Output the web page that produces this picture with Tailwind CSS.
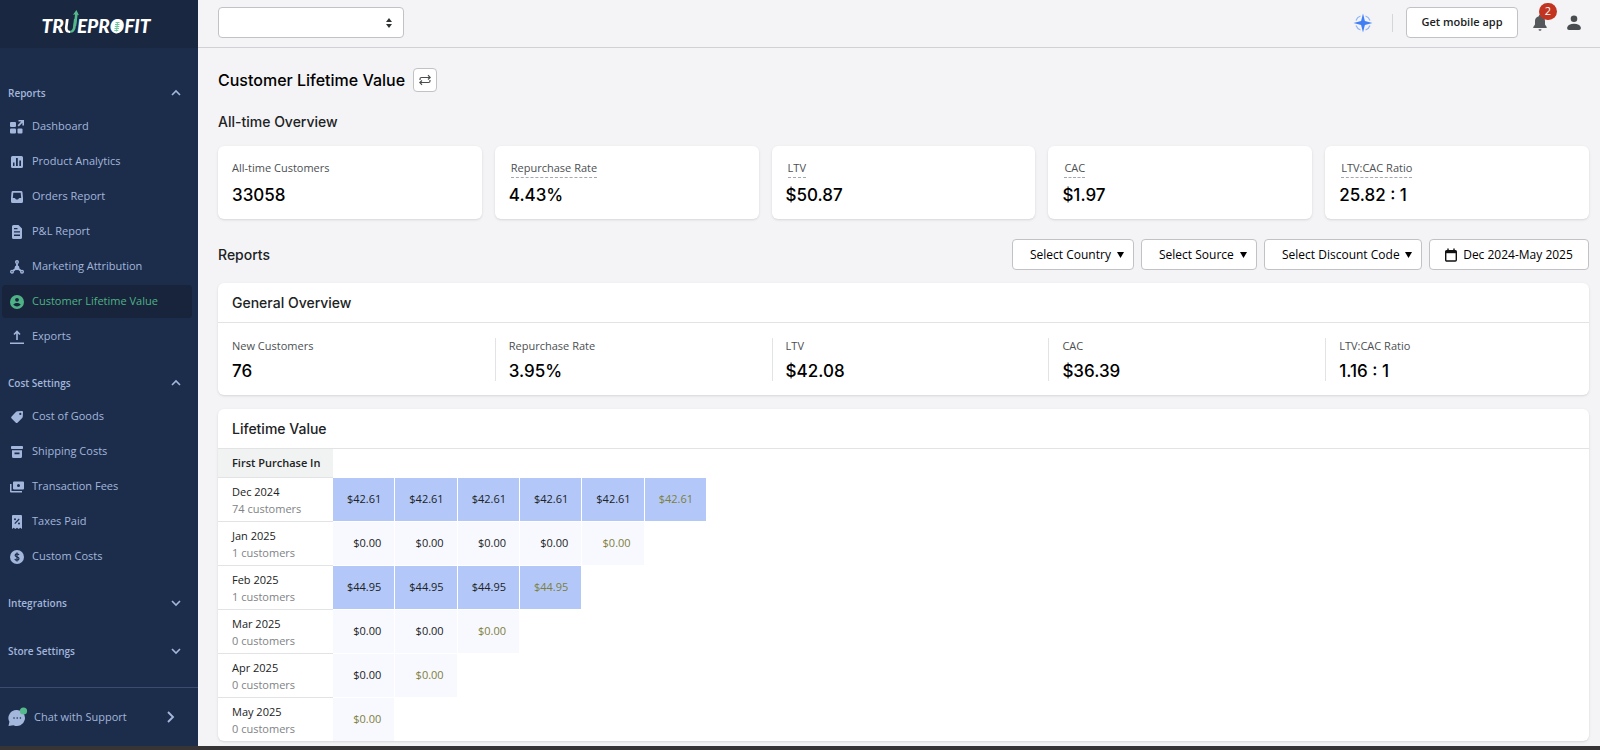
<!DOCTYPE html>
<html lang="en">
<head>
  <meta charset="UTF-8">
  <meta name="viewport" content="width=device-width, initial-scale=1.0">
  <title>Customer Lifetime Value</title>
  <script src="https://cdn.jsdelivr.net/npm/@tailwindcss/browser@4"></script>
</head>
<body class="min-h-screen flex flex-col bg-[#f4f4f6] font-['Open_Sans','Noto_Sans',sans-serif] text-[#202223]">
<div class="flex-1 flex">

  <!-- Sidebar -->
  <aside class="w-[198px] shrink-0 flex flex-col bg-[#1c2d4b] text-[#a3b6dc]">
    <a href="#" aria-label="TrueProfit" class="h-12 pt-1 pr-1.5 flex items-center justify-center bg-[#192840] font-['Lato',sans-serif] font-black italic text-[19px] leading-6 text-white">
      <span>TR</span><span class="relative bg-linear-to-r from-white from-50% to-[#55b98c] to-50% bg-clip-text text-transparent">U<svg class="absolute -top-1 -right-0.5 w-2 h-4" viewBox="0 0 8 16" fill="#55b98c"><path d="M5.400 0 8 5.200 6.600 4.800 5.200 16H2.600L4 4.600 2 4.800z"/></svg></span><span>EPR</span><span class="relative">O<svg class="absolute top-[5px] left-0 w-3.5 h-[15px]" viewBox="0 0 14 15"><ellipse cx="7" cy="7.500" rx="5.500" ry="7" transform="rotate(10 7 7.500)" fill="#fff"/><path d="M5.500 3.500h4M5 5.500h4.500M4.800 7.500h4.500M4.500 9.500h4.500M4.300 11.500h4M7.500 3l-1 9.500" fill="none" stroke="#6cc39c"/></svg></span><span>FIT</span>
    </a>

    <nav class="flex-1 text-[11px]">
      <button type="button" class="mt-[33px] w-full h-6 pl-2 pr-4 flex items-center justify-between text-[10px] font-semibold">
        Reports
        <svg class="w-3 h-3" viewBox="0 0 12 12" fill="none" stroke="currentColor" stroke-width="1.6"><path d="M2 8l4-4 4 4"/></svg>
      </button>
      <ul class="mt-[5px] pl-0.5 pr-1.5 flex flex-col gap-0.5">
        <li><a href="#" class="h-[33px] pl-2 flex items-center gap-2">
          <svg class="w-3.5 h-3.5" viewBox="0 0 14 14" fill="currentColor"><rect y="2" width="6" height="5" rx="1"/><rect y="8.5" width="6" height="5" rx="1"/><rect x="7.5" y="8.5" width="5" height="5" rx="1"/><path d="M8.5 0H14v5.5h-1.6V2.8L8.8 6.4 7.6 5.2l3.6-3.6H8.5z"/></svg>
          Dashboard</a></li>
        <li><a href="#" class="h-[33px] pl-2 flex items-center gap-2">
          <svg class="w-3.5 h-3.5" viewBox="0 0 14 14" fill="currentColor" fill-rule="evenodd"><path d="M2.5 1h9A1.5 1.5 0 0 1 13 2.500v9a1.500 1.500 0 0 1-1.500 1.500h-9A1.500 1.500 0 0 1 1 11.500v-9A1.500 1.500 0 0 1 2.500 1zM3 7.500V11h1.500V7.500zM6 3v8h1.800V3zM9.300 5.500V11H11V5.500z"/></svg>
          Product Analytics</a></li>
        <li><a href="#" class="h-[33px] pl-2 flex items-center gap-2">
          <svg class="w-3.5 h-3.5" viewBox="0 0 14 14" fill="currentColor" fill-rule="evenodd"><path d="M3 1h8a1.500 1.500 0 0 1 1.500 1.300L13 8v3.500a1.500 1.500 0 0 1-1.500 1.500h-9A1.500 1.500 0 0 1 1 11.500V8l.5-5.700A1.500 1.500 0 0 1 3 1zM3.300 2.800 2.800 8h1.700c.5 0 .7.300.9.700.2.500.5.800 1 .8h1.200c.5 0 .8-.300 1-.8.2-.400.400-.700.900-.700h1.700l-.5-5.200z"/></svg>
          Orders Report</a></li>
        <li><a href="#" class="h-[33px] pl-2 flex items-center gap-2">
          <svg class="w-3.5 h-3.5" viewBox="0 0 14 14" fill="currentColor" fill-rule="evenodd"><path d="M3.500 0H8.500L12 3.500v9a1.500 1.500 0 0 1-1.500 1.500h-7A1.500 1.500 0 0 1 2 12.500v-11A1.500 1.500 0 0 1 3.500 0zM4 3v1.300h3.500V3zM4 6.300v1.300h6V6.300zM4 9.600v1.300h6V9.600z"/></svg>
          P&amp;L Report</a></li>
        <li><a href="#" class="h-[33px] pl-2 flex items-center gap-2">
          <svg class="w-3.5 h-3.5" viewBox="0 0 14 14" fill="none" stroke="currentColor" stroke-width="1.400"><circle cx="7" cy="2" r="1.300"/><circle cx="2" cy="11.700" r="1.300"/><circle cx="12" cy="11.700" r="1.300"/><path d="M7 3.500V7M3.200 10.800 6 8.500M10.800 10.800 8 8.500" stroke-width="1.800"/><circle cx="7" cy="7.800" r="1.700" fill="currentColor"/></svg>
          Marketing Attribution</a></li>
        <li><a href="#" aria-current="page" class="h-[33px] pl-2 flex items-center gap-2 rounded-sm bg-[#17243b] text-[#4fb286]">
          <svg class="w-3.5 h-3.5" viewBox="0 0 14 14"><circle cx="7" cy="7" r="7" fill="currentColor"/><circle cx="7" cy="4.800" r="1.900" fill="#17243b"/><path d="M3.300 9.600C4 8.400 5.400 7.900 7 7.900s3 .5 3.700 1.700C10 10.800 8.600 11.400 7 11.400S4 10.800 3.300 9.600z" fill="#17243b"/></svg>
          Customer Lifetime Value</a></li>
        <li><a href="#" class="h-[33px] pl-2 flex items-center gap-2">
          <svg class="w-3.5 h-3.5" viewBox="0 0 14 14" fill="none" stroke="currentColor" stroke-width="1.600"><path d="M7 10V1.500M4 4.500l3-3 3 3M0 13.200h14"/></svg>
          Exports</a></li>
      </ul>

      <button type="button" class="mt-[18px] w-full h-6 pl-2 pr-4 flex items-center justify-between text-[10px] font-semibold">
        Cost Settings
        <svg class="w-3 h-3" viewBox="0 0 12 12" fill="none" stroke="currentColor" stroke-width="1.6"><path d="M2 8l4-4 4 4"/></svg>
      </button>
      <ul class="mt-[5px] pl-0.5 pr-1.5 flex flex-col gap-0.5">
        <li><a href="#" class="h-[33px] pl-2 flex items-center gap-2">
          <svg class="w-3.5 h-3.5" viewBox="0 0 14 14" fill="currentColor" fill-rule="evenodd"><path d="M7.500 1.200 12 1a1 1 0 0 1 1 1l-.2 4.500a2 2 0 0 1-.6 1.400l-4.500 4.500a1.500 1.500 0 0 1-2.100 0L1.600 8.500a1.500 1.500 0 0 1 0-2.100l4.500-4.600a2 2 0 0 1 1.400-.6zM10.300 2.800a1.100 1.100 0 1 0 0 2.200 1.100 1.100 0 0 0 0-2.200z"/></svg>
          Cost of Goods</a></li>
        <li><a href="#" class="h-[33px] pl-2 flex items-center gap-2">
          <svg class="w-3.5 h-3.5" viewBox="0 0 14 14" fill="currentColor" fill-rule="evenodd"><rect x="1" y="1" width="12" height="3" rx="0.800"/><path d="M2 5.200h10v6.300a1.500 1.500 0 0 1-1.500 1.500h-7A1.500 1.500 0 0 1 2 11.500zM4.500 7.500v1.800h5V7.500z"/></svg>
          Shipping Costs</a></li>
        <li><a href="#" class="h-[33px] pl-2 flex items-center gap-2">
          <svg class="w-3.5 h-3.5" viewBox="0 0 14 14" fill="currentColor" fill-rule="evenodd"><path d="M4 1.500h9a1 1 0 0 1 1 1v6a1 1 0 0 1-1 1H4a1 1 0 0 1-1-1v-6a1 1 0 0 1 1-1zM8.500 4a1.500 1.500 0 1 0 0 3 1.500 1.500 0 0 0 0-3z"/><path d="M0 4h1.500v7H12v1.500H1a1 1 0 0 1-1-1z"/></svg>
          Transaction Fees</a></li>
        <li><a href="#" class="h-[33px] pl-2 flex items-center gap-2">
          <svg class="w-3.5 h-3.5" viewBox="0 0 14 14"><path d="M3 0h8a1 1 0 0 1 1 1v13l-1.700-1.200L8.700 14 7 12.800 5.300 14l-1.600-1.200L2 14V1a1 1 0 0 1 1-1z" fill="currentColor"/><path d="M4.800 8.700 9.200 4" stroke="#1c2d4b" stroke-width="1.200"/><circle cx="5" cy="4.300" r="1" fill="#1c2d4b"/><circle cx="9" cy="8.400" r="1" fill="#1c2d4b"/></svg>
          Taxes Paid</a></li>
        <li><a href="#" class="h-[33px] pl-2 flex items-center gap-2">
          <svg class="w-3.5 h-3.5" viewBox="0 0 14 14"><circle cx="7" cy="7" r="7" fill="currentColor"/><path d="M9 5c-.3-.8-1-1.200-2-1.200-1.100 0-1.900.5-1.900 1.500 0 2.100 3.900 1.100 3.900 3.300 0 1-.8 1.600-2 1.600-1.100 0-1.900-.5-2.100-1.400M7 2.500v9" fill="none" stroke="#1c2d4b" stroke-width="1.200"/></svg>
          Custom Costs</a></li>
      </ul>

      <button type="button" class="mt-[18px] w-full h-6 pl-2 pr-4 flex items-center justify-between text-[10px] font-semibold">
        Integrations
        <svg class="w-3 h-3" viewBox="0 0 12 12" fill="none" stroke="currentColor" stroke-width="1.6"><path d="M2 4l4 4 4-4"/></svg>
      </button>
      <button type="button" class="mt-6 w-full h-6 pl-2 pr-4 flex items-center justify-between text-[10px] font-semibold">
        Store Settings
        <svg class="w-3 h-3" viewBox="0 0 12 12" fill="none" stroke="currentColor" stroke-width="1.6"><path d="M2 4l4 4 4-4"/></svg>
      </button>
    </nav>

    <button type="button" class="h-[59px] pl-2 pr-[22px] flex items-center gap-1.5 border-t border-[#3a4c70] text-[11px]">
      <svg class="w-5 h-5" viewBox="0 0 20 20"><path d="M9 3a8 8 0 1 1-3.500 15.200L.5 19l.9-4.200A8 8 0 0 1 9 3z" fill="#a3b6dc"/><g fill="#1c2d4b"><circle cx="6" cy="11" r="0.800"/><circle cx="9.200" cy="11" r="0.800"/><circle cx="12.400" cy="11" r="0.800"/></g><circle cx="15.500" cy="4" r="3.600" fill="#55b98c"/></svg>
      Chat with Support
      <svg class="ml-auto w-3 h-3" viewBox="0 0 12 12" fill="none" stroke="currentColor" stroke-width="1.900"><path d="M4 1l5 5-5 5"/></svg>
    </button>
  </aside>

  <div class="flex-1 min-w-0">
    <!-- Top bar -->
    <header class="h-12 pl-5 pr-[19px] pb-0.5 flex items-center justify-between border-b border-[#d0d1d4]">
      <div class="relative w-[186px]">
        <select aria-label="Store" class="w-full h-[31px] px-3 appearance-none rounded-sm border border-[#c0c2c5] bg-white text-xs">
          <option></option>
        </select>
        <svg class="absolute right-3 top-[11px] w-1.5 h-2.5 pointer-events-none" viewBox="0 0 6 10" fill="#303335"><path d="M3 0l3 4H0zM3 10L0 6h6z"/></svg>
      </div>
      <div class="flex items-center">
        <button type="button" aria-label="What's new">
          <svg class="w-5 h-5" viewBox="0 0 20 20"><path d="M10 .5l1.900 7.600L19.500 10l-7.600 1.900L10 19.500l-1.900-7.600L.5 10l7.600-1.900z" fill="#4080f5"/><path d="M12.500 3a7.500 7.500 0 0 1 4.500 4.500M17 12.500a7.500 7.500 0 0 1-4.500 4.500M7.500 17A7.500 7.500 0 0 1 3 12.500M3 7.500A7.500 7.500 0 0 1 7.500 3" fill="none" stroke="#8fb4f8" stroke-width="1.200"/></svg>
        </button>
        <span class="ml-[19px] w-px h-[18px] bg-[#d5d6da]"></span>
        <button type="button" class="ml-[13px] h-[31px] w-[112px] rounded-sm border border-[#c0c2c5] bg-white text-[11px] font-semibold">Get mobile app</button>
        <button type="button" aria-label="Notifications" class="relative ml-[15px]">
          <svg class="w-3.5 h-4" viewBox="0 0 14 16" fill="#55585b"><path d="M7 0c.7 0 1.200.5 1.200 1.200A5 5 0 0 1 12 6v3.500l1.700 2.500c.2.500 0 1-.5 1H.8c-.5 0-.7-.5-.5-1L2 9.500V6a5 5 0 0 1 3.800-4.800C5.800.500 6.300 0 7 0zM5.500 14.200h3a1.500 1.500 0 0 1-3 0z"/></svg>
          <span class="absolute -top-3 left-1.5 w-[18px] h-[17px] rounded-full bg-[#c23420] text-[11px] leading-4 text-white">2</span>
        </button>
        <button type="button" aria-label="Account" class="ml-5">
          <svg class="w-3.5 h-4" viewBox="0 0 14 16" fill="#4a4d50"><circle cx="7" cy="3.800" r="3.300"/><path d="M.2 12.500C.8 10 3.300 8.800 7 8.800s6.200 1.200 6.800 3.700c.3 1.500-.5 2.500-1.800 2.500H2C.7 15-.1 14 .2 12.500z"/></svg>
        </button>
      </div>
    </header>

    <main class="pt-5 pb-[5px] pl-5 pr-[11px]">
      <div class="h-6 flex items-center gap-2">
        <h1 class="font-['Inter',sans-serif] font-medium text-base text-black">Customer Lifetime Value</h1>
        <button type="button" aria-label="Switch report" class="w-6 h-6 flex items-center justify-center rounded-sm border border-[#c0c2c5] bg-white">
          <svg class="w-3 h-3" viewBox="0 0 12 12" fill="none" stroke="#4a4d50" stroke-width="1.200"><path d="M1 6V5a1.500 1.500 0 0 1 1.500-1.500H11M9 1.200l2.200 2.300L9 5.500M11 6v1a1.500 1.500 0 0 1-1.500 1.500H1M3 6.500.8 8.500 3 10.800"/></svg>
        </button>
      </div>

      <h2 class="mt-5 font-['Inter',sans-serif] font-medium text-sm">All-time Overview</h2>
      <div class="mt-3.5 grid grid-cols-5 gap-[13px]">
        <div class="pt-3 pb-2.5 px-3.5 rounded-md bg-white shadow-sm">
          <p class="text-[11px] leading-5 text-[#4c4f52]">All-time Customers</p>
          <p class="mt-[3px] font-['Inter',sans-serif] font-medium text-[17px] leading-7 text-black">33058</p>
        </div>
        <div class="pt-3 pb-2.5 px-3.5 rounded-md bg-white shadow-sm">
          <p class="pl-0.5 text-[11px] leading-5 text-[#4c4f52]"><span class="pb-0.5 border-b border-dashed border-[#a5a8ac]">Repurchase Rate</span></p>
          <p class="mt-[3px] font-['Inter',sans-serif] font-medium text-[17px] leading-7 text-black">4.43%</p>
        </div>
        <div class="pt-3 pb-2.5 px-3.5 rounded-md bg-white shadow-sm">
          <p class="pl-0.5 text-[11px] leading-5 text-[#4c4f52]"><span class="pb-0.5 border-b border-dashed border-[#a5a8ac]">LTV</span></p>
          <p class="mt-[3px] font-['Inter',sans-serif] font-medium text-[17px] leading-7 text-black">$50.87</p>
        </div>
        <div class="pt-3 pb-2.5 px-3.5 rounded-md bg-white shadow-sm">
          <p class="pl-0.5 text-[11px] leading-5 text-[#4c4f52]"><span class="pb-0.5 border-b border-dashed border-[#a5a8ac]">CAC</span></p>
          <p class="mt-[3px] font-['Inter',sans-serif] font-medium text-[17px] leading-7 text-black">$1.97</p>
        </div>
        <div class="pt-3 pb-2.5 px-3.5 rounded-md bg-white shadow-sm">
          <p class="pl-0.5 text-[11px] leading-5 text-[#4c4f52]"><span class="pb-0.5 border-b border-dashed border-[#a5a8ac]">LTV:CAC Ratio</span></p>
          <p class="mt-[3px] font-['Inter',sans-serif] font-medium text-[17px] leading-7 text-black">25.82 : 1</p>
        </div>
      </div>

      <!-- Filters -->
      <div class="mt-5 flex items-center justify-between">
        <h2 class="font-['Inter',sans-serif] font-medium text-sm">Reports</h2>
        <div class="flex gap-[7px] text-xs font-medium text-black">
          <div class="relative w-[122px]">
            <select aria-label="Country" class="w-full h-[31px] pl-[17px] appearance-none rounded-sm border border-[#c0c2c5] bg-white"><option>Select Country</option></select>
            <svg class="absolute right-2.5 top-[13px] w-[7px] h-1.5 pointer-events-none" viewBox="0 0 7 6"><path d="M0 0h7L3.500 6z"/></svg>
          </div>
          <div class="relative w-[116px]">
            <select aria-label="Source" class="w-full h-[31px] pl-[17px] appearance-none rounded-sm border border-[#c0c2c5] bg-white"><option>Select Source</option></select>
            <svg class="absolute right-2.5 top-[13px] w-[7px] h-1.5 pointer-events-none" viewBox="0 0 7 6"><path d="M0 0h7L3.500 6z"/></svg>
          </div>
          <div class="relative w-[158px]">
            <select aria-label="Discount code" class="w-full h-[31px] pl-[17px] appearance-none rounded-sm border border-[#c0c2c5] bg-white"><option>Select Discount Code</option></select>
            <svg class="absolute right-2.5 top-[13px] w-[7px] h-1.5 pointer-events-none" viewBox="0 0 7 6"><path d="M0 0h7L3.500 6z"/></svg>
          </div>
          <button type="button" class="w-[160px] h-[31px] flex items-center justify-center gap-1.5 rounded-sm border border-[#c0c2c5] bg-white">
            <svg class="w-3 h-3.5" viewBox="0 0 12 14" fill="none" stroke="#111" stroke-width="1.400"><rect x="0.700" y="2.700" width="10.600" height="10.300" rx="1"/><path d="M.7 4h10.600" stroke-width="2.400"/><path d="M3 .5v2.500M9 .5v2.500"/></svg>
            Dec 2024-May 2025
          </button>
        </div>
      </div>

      <section class="mt-[13px] rounded-md bg-white shadow-sm">
        <h3 class="h-10 px-3.5 flex items-center border-b border-[#e1e3e5] font-['Inter',sans-serif] font-medium text-sm">General Overview</h3>
        <div class="pt-[15px] pb-3.5 grid grid-cols-5 gap-[13px]">
          <div class="pl-3.5">
            <p class="text-[11px] leading-4 text-[#4c4f52]">New Customers</p>
            <p class="mt-[7px] font-['Inter',sans-serif] font-medium text-[17px] leading-5 text-black">76</p>
          </div>
          <div class="pl-[13px] border-l border-[#e1e3e5]">
            <p class="text-[11px] leading-4 text-[#4c4f52]">Repurchase Rate</p>
            <p class="mt-[7px] font-['Inter',sans-serif] font-medium text-[17px] leading-5 text-black">3.95%</p>
          </div>
          <div class="pl-[13px] border-l border-[#e1e3e5]">
            <p class="text-[11px] leading-4 text-[#4c4f52]">LTV</p>
            <p class="mt-[7px] font-['Inter',sans-serif] font-medium text-[17px] leading-5 text-black">$42.08</p>
          </div>
          <div class="pl-[13px] border-l border-[#e1e3e5]">
            <p class="text-[11px] leading-4 text-[#4c4f52]">CAC</p>
            <p class="mt-[7px] font-['Inter',sans-serif] font-medium text-[17px] leading-5 text-black">$36.39</p>
          </div>
          <div class="pl-[13px] border-l border-[#e1e3e5]">
            <p class="text-[11px] leading-4 text-[#4c4f52]">LTV:CAC Ratio</p>
            <p class="mt-[7px] font-['Inter',sans-serif] font-medium text-[17px] leading-5 text-black">1.16 : 1</p>
          </div>
        </div>
      </section>

      <section class="mt-3.5 rounded-md bg-white shadow-sm overflow-hidden">
        <h3 class="h-10 px-3.5 flex items-center border-b border-[#e1e3e5] font-['Inter',sans-serif] font-medium text-sm">Lifetime Value</h3>
        <table class="w-[489px] table-fixed border-separate border-spacing-0 text-[11px]">
          <thead>
            <tr class="h-7">
              <th scope="col" class="w-[115px] pl-3.5 bg-[#f1f2f2] text-left font-semibold whitespace-nowrap">First Purchase In</th>
              <td colspan="6"></td>
            </tr>
          </thead>
          <tbody id="cohorts"></tbody>
        </table>
      </section>
    </main>
  </div>
</div>
<footer class="h-1 bg-[#373435]"></footer>

<script>
  const cohorts = [
    { month: 'Dec 2024', customers: 74, value: '$42.61', months: 6 },
    { month: 'Jan 2025', customers: 1, value: '$0.00', months: 5 },
    { month: 'Feb 2025', customers: 1, value: '$44.95', months: 4 },
    { month: 'Mar 2025', customers: 0, value: '$0.00', months: 3 },
    { month: 'Apr 2025', customers: 0, value: '$0.00', months: 2 },
    { month: 'May 2025', customers: 0, value: '$0.00', months: 1 }
  ];

  document.getElementById('cohorts').innerHTML = cohorts.map(cohort => {
    const bg = cohort.value === '$0.00' ? 'bg-[#f8f9fe]' : 'bg-[#b3c8f8]';
    let cells = '';
    for (let i = 1; i <= 6; i++) {
      if (i > cohort.months) {
        cells += '<td></td>';
        continue;
      }
      // the last month is still running
      const color = i === cohort.months ? 'text-[#7d7f3c]' : 'text-[#202223]';
      cells += `<td class="pr-[13px] border-t border-r border-white text-right ${bg} ${color}">${cohort.value}</td>`;
    }
    return `
      <tr class="h-11">
        <th scope="row" class="pl-3.5 border-t border-[#e1e3e5] text-left font-normal leading-[17px]">
          ${cohort.month}<br><span class="text-[#808386]">${cohort.customers} customers</span>
        </th>
        ${cells}
      </tr>`;
  }).join('');
</script>
</body>
</html>
